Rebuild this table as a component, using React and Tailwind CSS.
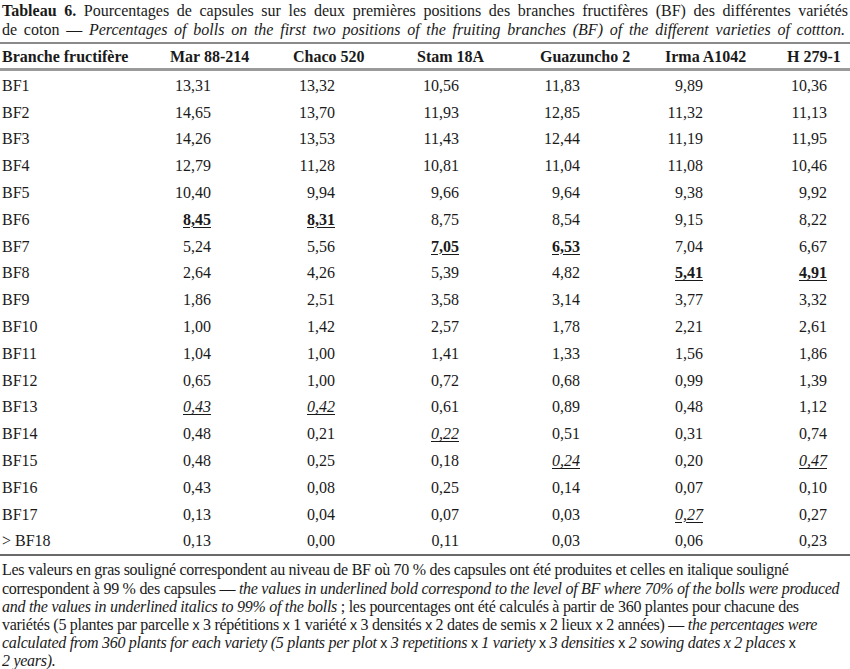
import React from "react";

const rows = [
  ["BF1", "13,31", "13,32", "10,56", "11,83", "9,89", "10,36"],
  ["BF2", "14,65", "13,70", "11,93", "12,85", "11,32", "11,13"],
  ["BF3", "14,26", "13,53", "11,43", "12,44", "11,19", "11,95"],
  ["BF4", "12,79", "11,28", "10,81", "11,04", "11,08", "10,46"],
  ["BF5", "10,40", "9,94", "9,66", "9,64", "9,38", "9,92"],
  ["BF6", "*8,45", "*8,31", "8,75", "8,54", "9,15", "8,22"],
  ["BF7", "5,24", "5,56", "*7,05", "*6,53", "7,04", "6,67"],
  ["BF8", "2,64", "4,26", "5,39", "4,82", "*5,41", "*4,91"],
  ["BF9", "1,86", "2,51", "3,58", "3,14", "3,77", "3,32"],
  ["BF10", "1,00", "1,42", "2,57", "1,78", "2,21", "2,61"],
  ["BF11", "1,04", "1,00", "1,41", "1,33", "1,56", "1,86"],
  ["BF12", "0,65", "1,00", "0,72", "0,68", "0,99", "1,39"],
  ["BF13", "_0,43", "_0,42", "0,61", "0,89", "0,48", "1,12"],
  ["BF14", "0,48", "0,21", "_0,22", "0,51", "0,31", "0,74"],
  ["BF15", "0,48", "0,25", "0,18", "_0,24", "0,20", "_0,47"],
  ["BF16", "0,43", "0,08", "0,25", "0,14", "0,07", "0,10"],
  ["BF17", "0,13", "0,04", "0,07", "0,03", "_0,27", "0,27"],
  ["> BF18", "0,13", "0,00", "0,11", "0,03", "0,06", "0,23"],
];

const headers = ["Mar 88-214", "Chaco 520", "Stam 18A", "Guazuncho 2", "Irma A1042", "H 279-1"];
const headPad = ["pl-[5px]", "pl-[5px]", "pl-[7px]", "pl-[8px]", "pl-[7px]", "pl-[7px]"];
const numPad = ["pr-[77px]", "pr-[75px]", "pr-[73px]", "pr-[78px]", "pr-[77px]", "pr-[23px]"];

const grid = "grid grid-cols-[165px_123px_122px_122px_126px_122px_70px]";

function Val({ v }) {
  if (v.startsWith("*")) return <span className="font-bold underline underline-offset-2">{v.slice(1)}</span>;
  if (v.startsWith("_")) return <span className="italic underline underline-offset-2">{v.slice(1)}</span>;
  return <span>{v}</span>;
}

const X = () => <span className="font-['Liberation_Sans',sans-serif] not-italic text-[14px]">x</span>;

export default function App() {
  return (
    <div className="w-[850px] h-[669px] bg-white text-[#1a1a1a] font-['Liberation_Serif',serif] text-[16px] leading-[19px] overflow-hidden">
      <div className="pl-[2px] pr-[2px] pt-[1px]">
        <div className="text-justify [text-align-last:justify]">
          <span className="font-bold">Tableau 6.</span> Pourcentages de capsules sur les deux premières positions des branches fructifères (BF) des différentes variétés
        </div>
        <div className="text-justify [text-align-last:justify] pr-[3px]">
          de coton — <span className="italic">Percentages of bolls on the first two positions of the fruiting branches (BF) of the different varieties of cottton.</span>
        </div>
      </div>
      <div className="mt-[3px] border-t-[2px] border-[#8a8a8a]" />
      <div className={`${grid} h-[24px] items-center font-bold`}>
        <div className="pl-[2px] whitespace-nowrap">Branche fructifère</div>
        {headers.map((h, i) => (
          <div key={h} className={`${headPad[i]} whitespace-nowrap`}>{h}</div>
        ))}
      </div>
      <div className="border-t-[3px] border-[#9a9a9a]" />
      <div className="pt-[1px]">
        {rows.map((r) => (
          <div key={r[0]} className={`${grid} h-[26.8px] items-center`}>
            <div className="pl-[2px] whitespace-nowrap">{r[0]}</div>
            {r.slice(1).map((v, i) => (
              <div key={i} className={`text-right ${numPad[i]} whitespace-nowrap`}>
                <Val v={v} />
              </div>
            ))}
          </div>
        ))}
      </div>
      <div className="border-t-[2px] border-[#6a6a6a]" />
      <div className="pl-[2px] pt-[5px] leading-[18.2px] tracking-[-0.27px]">
        <div className="whitespace-nowrap">Les valeurs en gras souligné correspondent au niveau de BF où 70 % des capsules ont été produites et celles en italique souligné</div>
        <div className="whitespace-nowrap">correspondent à 99 % des capsules — <span className="italic">the values in underlined bold correspond to the level of BF where 70% of the bolls were produced</span></div>
        <div className="whitespace-nowrap"><span className="italic">and the values in underlined italics to 99% of the bolls</span> ; les pourcentages ont été calculés à partir de 360 plantes pour chacune des</div>
        <div className="whitespace-nowrap">variétés (5 plantes par parcelle <X /> 3 répétitions <X /> 1 variété <X /> 3 densités <X /> 2 dates de semis <X /> 2 lieux <X /> 2 années) — <span className="italic">the percentages were</span></div>
        <div className="whitespace-nowrap italic">calculated from 360 plants for each variety (5 plants per plot <X /> 3 repetitions <X /> 1 variety <X /> 3 densities <X /> 2 sowing dates x 2 places <X /></div>
        <div className="whitespace-nowrap italic">2 years).</div>
      </div>
    </div>
  );
}
